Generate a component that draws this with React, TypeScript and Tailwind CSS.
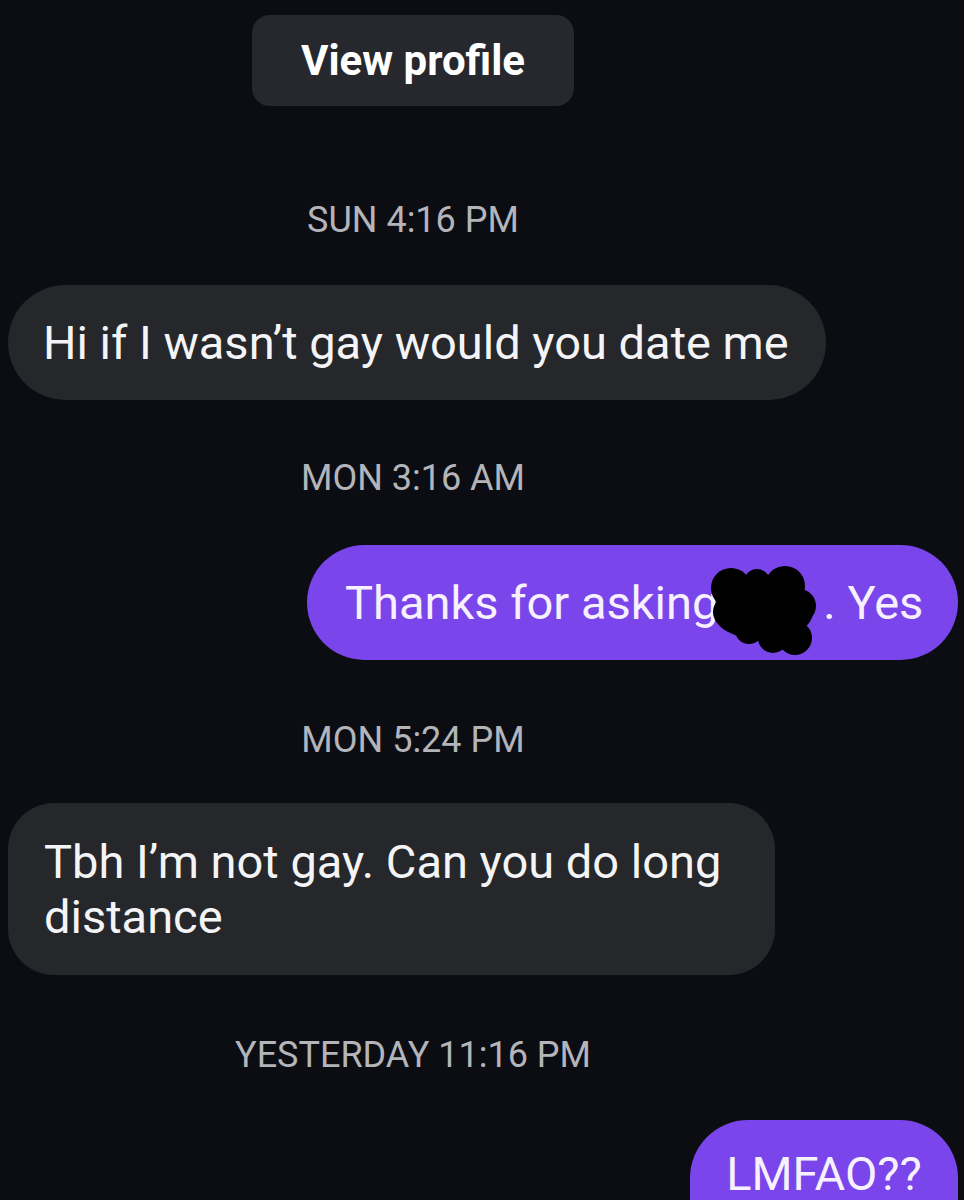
import React from "react";

const font = { fontFamily: "Roboto, 'Liberation Sans', sans-serif" };

export default function App() {
  return (
    <div className="w-[964px] h-[1200px] bg-[#0c0d12] overflow-hidden flex flex-col" style={font}>
      <div className="shrink-0 mt-[15px] ml-[252px] w-[322px] h-[91px] rounded-[18px] bg-[#26282d] flex items-center justify-center text-white font-bold text-[42px] leading-none">
        View profile
      </div>
      <div className="shrink-0 mt-[94px] w-[826px] text-center text-[36px] leading-[40px] text-[#b3b5ba]">SUN 4:16 PM</div>
      <div className="shrink-0 mt-[45px] ml-[8px] h-[115px] w-[818px] rounded-full bg-[#25272b] flex items-center pl-[35px] text-[47px] leading-none text-[#f4f4f6]">
        Hi if I wasn’t gay would you date me
      </div>
      <div className="shrink-0 mt-[58px] w-[826px] text-center text-[36px] leading-[40px] text-[#b3b5ba]">MON 3:16 AM</div>
      <div className="shrink-0 mt-[47px] self-end mr-[6px] h-[115px] w-[651px] rounded-full bg-[#7a45ea] flex items-center pl-[38px] text-[47px] leading-none text-[#f6f0ff]">
        <span>Thanks for asking</span>
        <svg width="110" height="92" viewBox="0 0 110 92" className="shrink-0 mt-[18px] -ml-[9px]">
          <g fill="#000">
            <circle cx="22" cy="22" r="20" />
            <circle cx="48" cy="16" r="13" />
            <circle cx="76" cy="20" r="20" />
            <circle cx="90" cy="40" r="17" />
            <ellipse cx="54" cy="46" rx="50" ry="28" />
            <circle cx="40" cy="64" r="14" />
            <circle cx="64" cy="72" r="15" />
            <circle cx="86" cy="72" r="17" />
          </g>
        </svg>
        <span className="ml-[4px]">. Yes</span>
      </div>
      <div className="shrink-0 mt-[60px] w-[826px] text-center text-[36px] leading-[40px] text-[#b3b5ba]">MON 5:24 PM</div>
      <div className="shrink-0 mt-[43px] ml-[8px] h-[172px] w-[767px] rounded-[46px] bg-[#25272b] flex flex-col justify-center pl-[36px] text-[47px] leading-[55px] text-[#f4f4f6]">
        <div className="whitespace-nowrap">Tbh I’m not gay. Can you do long</div>
        <div>distance</div>
      </div>
      <div className="shrink-0 mt-[60px] w-[826px] text-center text-[36px] leading-[40px] text-[#b3b5ba]">YESTERDAY 11:16 PM</div>
      <div className="shrink-0 mt-[45px] self-end mr-[6px] h-[80px] w-[268px] rounded-t-[58px] bg-[#7a45ea] flex justify-center pt-[32px] text-[47px] leading-[44px] text-[#f6f0ff]">
        LMFAO??
      </div>
    </div>
  );
}
